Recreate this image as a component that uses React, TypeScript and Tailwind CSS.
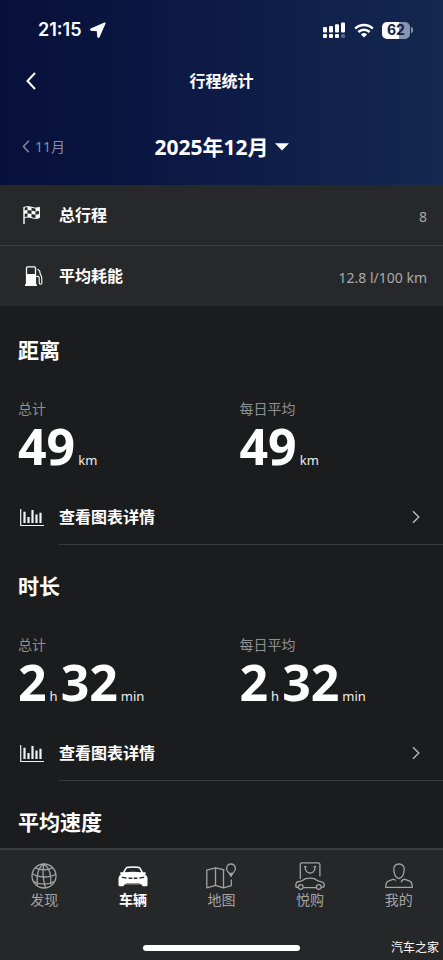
import React from "react";

const font = "font-['Noto_Sans','Noto_Sans_CJK_SC',sans-serif]";

function LocationIcon() {
  return (
    <svg width="16" height="16" viewBox="0 0 16 16" fill="#fff" stroke="#fff" strokeWidth="1.600" strokeLinejoin="round" aria-hidden="true">
      <path d="M14.800 1.200 1 7.300v.7l6.500.5.6 6.500h.7z" />
    </svg>
  );
}

function SignalIcon() {
  return (
    <svg width="23" height="16" viewBox="0 0 23 16" fill="#fff" aria-hidden="true">
      <rect x="0" y="5" width="4" height="5.500" rx="1" />
      <rect x="6" y="4" width="4" height="6.500" rx="1" />
      <rect x="12" y="2.200" width="4" height="8.300" rx="1" />
      <rect x="18" y="0.500" width="4" height="10" rx="1" />
      <rect x="0" y="12" width="4" height="4" rx="1" />
      <rect x="6" y="12" width="4" height="4" rx="1" />
      <rect x="12" y="12" width="4" height="4" rx="1" />
      <rect x="18" y="12" width="4" height="4" rx="1" opacity="0.3" />
    </svg>
  );
}

function WifiIcon() {
  return (
    <svg width="20" height="15" viewBox="0 0 20 15" fill="none" stroke="#fff" strokeWidth="2.500" aria-hidden="true">
      <path d="M1.200 5.600a12.600 12.600 0 0 1 17.600 0" />
      <path d="M4.400 9a8 8 0 0 1 11.200 0" />
      <path d="M10 14.600 6.900 11.400a4.500 4.500 0 0 1 6.200 0z" fill="#fff" stroke="none" />
    </svg>
  );
}

function ChevronLeft({ className }: { className: string }) {
  return (
    <svg className={className} viewBox="0 0 10 18" fill="none" stroke="currentColor" strokeWidth="2" aria-hidden="true">
      <path d="M9 1 1.500 9 9 17" />
    </svg>
  );
}

function ChevronRight() {
  return (
    <svg width="8" height="14" viewBox="0 0 8 14" fill="none" stroke="#b9b9ba" strokeWidth="1.400" aria-hidden="true">
      <path d="M1 1.200 6.800 7 1 12.800" />
    </svg>
  );
}

function FlagIcon() {
  return (
    <svg width="18" height="18" viewBox="0 0 18 18" fill="none" stroke="#fff" aria-hidden="true">
      <path d="M1 1v17" strokeWidth="1.400" />
      <path d="M1 1.400C4 .2 6.500.6 9 1.400s5 .9 7.400-.1v10.400c-2.600 1.100-5 .9-7.400.1s-5-1.200-8 0" strokeWidth="1" />
      <g fill="#fff" stroke="none">
        <path d="M4.500.8 8.500 1.200v3.300l-4-.6z" />
        <path d="m12.500 1.900 4-.5v3.300l-4 .7z" />
        <path d="M1.200 4.500 4.500 3.900v3.400l-3.300.6z" />
        <path d="m8.500 4.500 4 .9v3.300l-4-.8z" />
        <path d="m4.500 7.300 4 .6v3.700l-4-.6z" />
        <path d="m12.500 8.700 4-.7v3.600l-4 .8z" />
      </g>
    </svg>
  );
}

function FuelIcon() {
  return (
    <svg width="18" height="20" viewBox="0 0 18 20" fill="none" stroke="#fff" aria-hidden="true">
      <path d="M1.500 8.500V2q0-1.200 1.200-1.200h6.600q1.200 0 1.200 1.200v6.500" strokeWidth="1.300" />
      <path d="M.9 8h10.200v10.200h.8V20H0v-1.800h.9z" fill="#fff" stroke="none" />
      <path d="M12.500 3.200c2 1 2.800 2 2.600 4.300-.1 1.500 1.500 1.700 1.600 4 .1 2 .2 3.500.2 5.500 0 1.700-2.700 1.700-2.700 0v-5q0-1.500-1.400-1.600h-1.500" strokeWidth="1.100" />
    </svg>
  );
}

function ChartIcon() {
  return (
    <svg width="24" height="18" viewBox="0 0 24 18" fill="none" stroke="#f2f2f2" aria-hidden="true">
      <path d="M.7 0v16.500H24" strokeWidth="1.200" />
      <path d="M4.500 14V2.700M8.500 14V8M12.500 14V1M16.500 14V5.500M20.500 14V3.800" strokeWidth="2.200" />
    </svg>
  );
}

function GlobeIcon() {
  return (
    <svg width="26" height="26" viewBox="0 0 26 26" fill="none" stroke="currentColor" strokeWidth="1.300" aria-hidden="true">
      <circle cx="13" cy="13" r="12" />
      <path d="M13 1C8 4 5 10 6.500 22.500M13 1c-1.500 6-1.500 14 1.500 24M13 1c5 3.500 7.500 10 6.800 20.500" />
      <path d="M4.500 4.800c5 2.600 12 2.600 17 0M1.200 10.500c6 4.500 17.500 4.600 23.400.8M2.800 18.500c5.500 3.500 14.500 3.500 20.500 0" />
    </svg>
  );
}

function CarIcon() {
  return (
    <svg width="30" height="21" viewBox="0 0 30 21" fill="currentColor" aria-hidden="true">
      <path
        fillRule="evenodd"
        d="M8 1.200Q9 .3 15 .3t7 .9q1 .8 3 5h2.200q.9.300.8 1.500l-1.200.4q2.500 1.800 2.700 4V19q0 1.200-1.200 1.200h-3.200q-1.100 0-1.200-1.200l-.2-.5H6.300l-.2.5q-.1 1.200-1.200 1.200H1.700Q.5 20.200.5 19v-6.900q.2-2.200 2.700-4L2 7.700q-.1-1.200.8-1.500H5q2-4.200 3-5zM9 2.200Q7.800 3.500 6.800 6.200q8.200-.8 16.400 0Q22.200 3.500 21 2.200 15 1.200 9 2.200z"
      />
      <path d="M3.500 10.600 8.700 11.600v1.200l-4.600-.9zM26.500 10.600l-5.200 1v1.200l4.600-.9zM10.300 11.600h4v1.500h-3.400zM15.700 11.600h4l-.6 1.500h-3.400z" fill="#262728" />
      <path d="M7 18.600 8.500 17.600h13l1.500 1z" fill="#262728" />
    </svg>
  );
}

function MapIcon() {
  return (
    <svg width="30" height="26" viewBox="0 0 30 26" fill="none" stroke="currentColor" strokeWidth="1.300" strokeLinejoin="round" aria-hidden="true">
      <path d="M18.500 7 17.200 6.600 9.500 4.800.8 7.200v17.600l8.700-2.500 8 2.500 7.800-2.200v-6" />
      <path d="M9.500 4.800v17.500M17.500 6.800v18" />
      <path d="M25 13c-.4-2.400-4.400-3.800-4.400-7.600a4.400 4.400 0 0 1 8.800 0c0 3.800-4 5.200-4.400 7.600z" />
      <path d="m23.800 10.400 1.200 2.900 1.200-2.900z" fill="currentColor" />
    </svg>
  );
}

function ShopIcon() {
  return (
    <svg width="30" height="28" viewBox="0 0 30 28" fill="none" stroke="currentColor" strokeWidth="1.300" strokeLinejoin="round" aria-hidden="true">
      <path d="M5.300 17V2.500q0-1.700 1.700-1.700h16.200q1.700 0 1.700 1.700v12" />
      <path d="M10.300 4.500v1.700a4.800 4.800 0 0 0 9.600 0V4.500M9 4.700h2.600M18.600 4.700h2.600" />
      <path d="M3.200 25.500 1 25q-.6-3.500 1-5l5-1.200 3.500-2.200q5.500-1 8.700 0l4.300 2.600q4.500.8 5.400 2.300.8 2-.2 3.500l-2 .4M8.400 25.700h12.800" />
      <circle cx="5.800" cy="25" r="2.400" />
      <circle cx="23.800" cy="25" r="2.400" />
    </svg>
  );
}

function PersonIcon() {
  return (
    <svg width="28" height="26" viewBox="0 0 28 26" fill="none" stroke="currentColor" strokeWidth="1.300" strokeLinejoin="round" aria-hidden="true">
      <path d="M14 1c3.500 0 5.300 2.300 5.200 5.500C19.100 11 17 15.500 14 15.500S8.900 11 8.800 6.500C8.700 3.300 10.500 1 14 1z" />
      <path d="M10.800 17.600Q9.700 16 8 16.400l-4.700 1.700Q.8 19 .7 24.300h26.600Q27.200 19 24.700 18.100L20 16.400q-3-.6-3.800 3" />
    </svg>
  );
}

function Stat({ label, parts }: { label: string; parts: [string, string][] }) {
  return (
    <div>
      <dt className="text-sm leading-5 text-[#8f9091]">{label}</dt>
      <dd className="mt-0.5 flex items-baseline gap-[3px] text-white">
        {parts.map(([value, unit]) => (
          <React.Fragment key={unit}>
            <span className="text-[50px] leading-[50px] font-bold">{value}</span>
            <span className="text-[13px] leading-5 text-[#eeeeee]">{unit}</span>
          </React.Fragment>
        ))}
      </dd>
    </div>
  );
}

function Section({ title, parts }: { title: string; parts?: [string, string][] }) {
  return (
    <section className="shrink-0">
      <h2 className="px-[18px] pt-[26px] text-[21px] leading-[30px] font-bold">{title}</h2>
      {parts && (
        <>
          <dl className="mt-[34px] grid grid-cols-2">
            <div className="pl-[18px]">
              <Stat label="总计" parts={parts} />
            </div>
            <div className="pl-[18px]">
              <Stat label="每日平均" parts={parts} />
            </div>
          </dl>
          <a href="#chart" className="mt-[19px] flex h-[55px] items-stretch">
            <span className="flex w-[59px] shrink-0 items-center pl-5">
              <ChartIcon />
            </span>
            <span className="flex flex-1 items-center justify-between border-b border-[#38393b] pr-[23px] font-bold">
              查看图表详情
              <ChevronRight />
            </span>
          </a>
        </>
      )}
    </section>
  );
}

const tabs = [
  { label: "发现", icon: <GlobeIcon /> },
  { label: "车辆", icon: <CarIcon />, active: true },
  { label: "地图", icon: <MapIcon /> },
  { label: "悦购", icon: <ShopIcon /> },
  { label: "我的", icon: <PersonIcon /> },
];

export default function App() {
  return (
    <div className={`relative flex h-screen flex-col bg-[#1b1c1e] text-base text-white ${font}`}>
      <header className="shrink-0 bg-linear-to-r from-[#07103a] via-[#0d1b46] to-[#142850]">
        <div className="flex h-[60px] items-center justify-between pr-[30px] pl-[38px] font-['Inter',sans-serif]">
          <div className="flex items-center gap-2">
            <span className="text-lg font-semibold">21:15</span>
            <LocationIcon />
          </div>
          <div className="flex items-center gap-2">
            <SignalIcon />
            <WifiIcon />
            <div className="flex items-center gap-px">
              <div className="flex h-[17px] w-7 items-center justify-center rounded-[5px] bg-linear-to-r from-white from-62% to-[#8a93ac] to-62% text-sm font-bold text-[#0f1f4a]">
                62
              </div>
              <div className="h-1.5 w-0.5 rounded-r bg-[#8a93ac]" />
            </div>
          </div>
        </div>
        <div className="grid h-[42px] grid-cols-[1fr_auto_1fr] items-center px-[26px]">
          <button type="button" aria-label="返回">
            <ChevronLeft className="h-[18px] w-2.5" />
          </button>
          <h1 className="font-bold">行程统计</h1>
        </div>
        <div className="mt-1.5 grid h-[77px] grid-cols-[1fr_auto_1fr] items-center px-[22px]">
          <button type="button" className="flex items-center gap-[5px] text-sm text-[#858ca6]">
            <ChevronLeft className="h-[13px] w-2" />
            11月
          </button>
          <label className="flex items-center gap-1.5">
            <select aria-label="月份" className="appearance-none bg-transparent text-[21px] leading-8 font-bold [field-sizing:content]">
              <option>2025年12月</option>
            </select>
            <svg width="14" height="8" viewBox="0 0 14 8" fill="#fff" aria-hidden="true">
              <path d="M0 .3h14L7 7.600z" />
            </svg>
          </label>
        </div>
      </header>

      <main className="min-h-0 flex-1 overflow-y-auto">
        <dl className="bg-[#272829]">
          <div className="flex h-[61px] items-center border-b border-[#3e3f41] pr-4">
            <dt className="flex flex-1 items-center font-bold">
              <span className="w-[59px] pl-[23px]">
                <FlagIcon />
              </span>
              总行程
            </dt>
            <dd className="pt-1 text-sm text-[#a9aaab]">8</dd>
          </div>
          <div className="flex h-[60px] items-center pr-4">
            <dt className="flex flex-1 items-center font-bold">
              <span className="w-[59px] pl-[25px]">
                <FuelIcon />
              </span>
              平均耗能
            </dt>
            <dd className="pt-1 text-sm text-[#a9aaab]">12.8 l/100 km</dd>
          </div>
        </dl>
        <div className="pt-[3px]">
          <Section title="距离" parts={[["49", "km"]]} />
          <Section title="时长" parts={[["2", "h"], ["32", "min"]]} />
          <Section title="平均速度" />
        </div>
      </main>

      <nav className="shrink-0 border-t-2 border-[#3a3b3d] bg-[#262728]">
        <div className="grid grid-cols-5 pt-3">
          {tabs.map((tab) => (
            <a
              key={tab.label}
              href="#tab"
              className={`flex flex-col items-center text-sm leading-5 ${tab.active ? "font-bold text-white" : "text-[#a3a4a5]"}`}
            >
              <span className="flex h-7 items-center">{tab.icon}</span>
              {tab.label}
            </a>
          ))}
        </div>
        <div className="mx-auto mt-[35px] mb-[9px] h-1.5 w-[157px] rounded-full bg-white" />
      </nav>
      <span className="absolute right-1 bottom-1 text-xs leading-4">汽车之家</span>
    </div>
  );
}
